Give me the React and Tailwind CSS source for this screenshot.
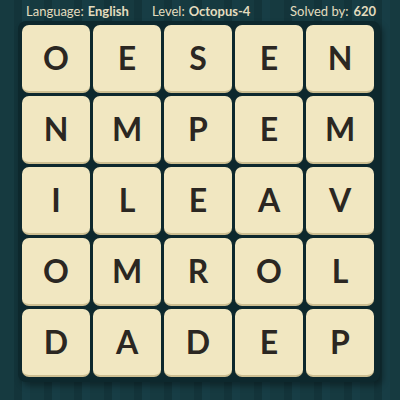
export default function App() {
  const rows = ["OESEN", "NMPEM", "ILEAV", "OMROL", "DADEP"];
  return (
    <div
      className="w-[400px] h-[400px] overflow-hidden bg-[repeating-linear-gradient(90deg,#163a40_0px,#163a40_14px,#13343a_14px,#13343a_22px,#173d45_22px,#173d45_30px)] flex flex-col items-start"
      style={{ fontFamily: "Lato, 'Open Sans', sans-serif" }}
    >
      <div className="h-[21px] pt-[2px] w-full flex items-center text-[13px] text-[#e3dcbf] leading-none">
        <div className="ml-[26px] w-[126px] flex gap-[4px]">
          <span>Language:</span>
          <span className="font-bold">English</span>
        </div>
        <div className="w-[138px] flex gap-[4px]">
          <span>Level:</span>
          <span className="font-bold">Octopus-4</span>
        </div>
        <div className="flex gap-[5px]">
          <span>Solved by:</span>
          <span className="font-bold">620</span>
        </div>
      </div>
      <div className="ml-[18px] p-[4px] pr-[6px] pb-[5px] rounded-[8px] bg-[#0d282d] shadow-[3px_4px_6px_rgba(0,0,0,0.35)]">
        <div className="grid grid-cols-5 gap-[3px]">
          {rows.join("").split("").map((ch, i) => (
            <div
              key={i}
              className="w-[68px] h-[68px] rounded-[7px] bg-[#f1e7c1] border-b-[2px] border-[#cdbf92] flex items-center justify-center text-[32px] font-bold text-[#2b2722]"
            >
              {ch}
            </div>
          ))}
        </div>
      </div>
    </div>
  );
}
